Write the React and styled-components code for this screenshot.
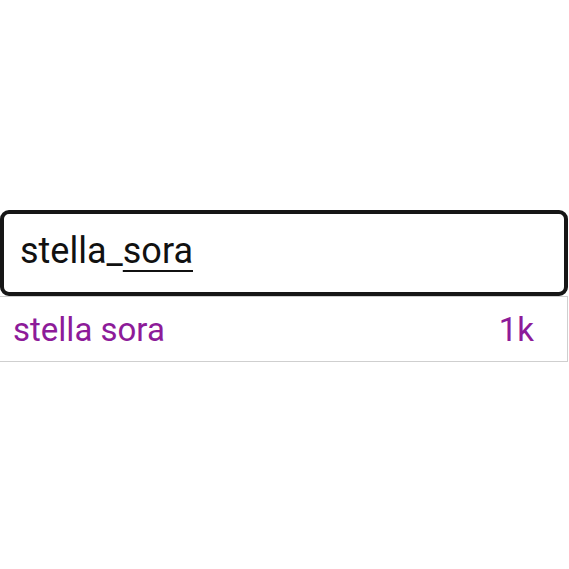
import React from 'react';
import styled, { createGlobalStyle } from 'styled-components';

const GlobalStyle = createGlobalStyle`
  html, body {
    margin: 0;
    padding: 0;
    background: #ffffff;
  }
  body {
    font-family: Roboto, 'Liberation Sans', sans-serif;
  }
`;

const Page = styled.div`
  width: 569px;
  height: 569px;
  padding-top: 210px;
  box-sizing: border-box;
`;

const SearchBox = styled.div`
  box-sizing: border-box;
  width: 568px;
  height: 86px;
  border: 4px solid #161616;
  border-radius: 9px;
  display: flex;
  align-items: center;
  padding: 0 0 4px 16px;
  font-size: 36px;
  color: #111111;
`;

const Composing = styled.span`
  text-decoration: underline;
  text-decoration-thickness: 1.5px;
  text-underline-offset: 7px;
`;

const Suggestion = styled.div`
  box-sizing: border-box;
  width: 568px;
  height: 66px;
  border: 1px solid #cfcfcf;
  border-left: none;
  display: flex;
  align-items: center;
  justify-content: space-between;
  padding: 0 33px 0 13px;
  font-size: 33px;
  color: #8d1b99;
`;

const Count = styled.span``;

const App = () => (
  <Page>
    <GlobalStyle />
    <SearchBox>
      <span>stella_</span>
      <Composing>sora</Composing>
    </SearchBox>
    <Suggestion>
      <span>stella sora</span>
      <Count>1k</Count>
    </Suggestion>
  </Page>
);

export default App;
